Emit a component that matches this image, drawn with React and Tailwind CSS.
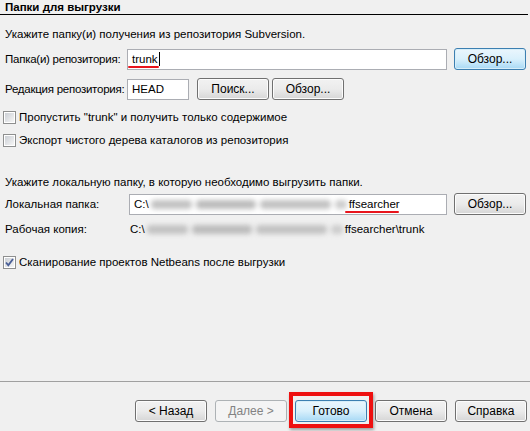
import React from 'react';

const btn =
  'h-[22px] w-[72px] rounded-[3px] border border-[#707070] bg-gradient-to-b from-[#f2f2f2] via-[#ebebeb] to-[#d6d6d6] text-[12px] text-black shadow-[inset_0_0_0_1px_#fcfcfc]';
const btnBlue =
  'h-[22px] w-[72px] rounded-[3px] border border-[#3c7fb1] bg-gradient-to-b from-[#eaf6fd] via-[#d9f0fc] to-[#a7d9f5] text-[12px] text-black shadow-[inset_0_0_0_1px_#d7eef9]';
const field = 'h-[21px] border border-[#abadb3] bg-white px-[4px] flex items-center whitespace-nowrap';

const CheckBox = ({ checked }) => (
  <span className="-ml-[2px] flex h-[13px] w-[13px] shrink-0 items-center justify-center border border-[#8e8f8f] bg-white">
    <span className="relative flex h-[9px] w-[9px] items-center justify-center bg-gradient-to-br from-[#cbcfd5] to-[#f6f6f6]">
      {checked && (
        <svg width="11" height="11" viewBox="0 0 11 11" className="absolute -left-[1px] -top-[1px]">
          <path d="M2 5.5 L4.3 8.2 L9 2" fill="none" stroke="#4a5f97" strokeWidth="1.8" />
        </svg>
      )}
    </span>
  </span>
);

// smudged, unreadable part of the path
const Blurred = ({ w }) => (
  <span className={`flex h-[12px] shrink-0 items-center gap-[4px] px-[2px] blur-[2.5px] ${w}`}>
    <span className="h-[9px] w-[42px] rounded-sm bg-[#c2c2c2]" />
    <span className="h-[9px] w-[60px] rounded-sm bg-[#bcbcbc]" />
    <span className="h-[9px] w-[72px] rounded-sm bg-[#c2c2c2]" />
    <span className="h-[9px] w-[12px] rounded-sm bg-[#cccccc]" />
  </span>
);

const RedLine = ({ className }) => (
  <span className={`absolute h-[2px] rounded-full bg-[#e8141c] ${className}`} />
);

export default function App() {
  return (
    <div
      className="flex h-[431px] w-[530px] flex-col bg-[#f0f0f0] text-[11.5px] text-black"
      style={{ fontFamily: '"Liberation Sans", Arial, sans-serif' }}
    >
      {/* Header */}
      <div className="mr-[2px] flex h-[15px] items-center border-b border-black pl-[5px]">
        <span className="font-bold leading-[14px]">Папки для выгрузки</span>
      </div>

      <div className="flex flex-col whitespace-nowrap pl-[5px] leading-[15px]">
        <div className="mt-[12px]">Укажите папку(и) получения из репозитория Subversion.</div>

        {/* Repository folders */}
        <div className="mt-[6px] flex items-center">
          <span className="w-[122px] shrink-0 tracking-[-0.25px]">Папка(и) репозитория:</span>
          <div className={`${field} relative w-[320px]`}>
            trunk<span className="ml-[1px] h-[14px] w-px bg-black" />
            <RedLine className="left-[0px] top-[16px] w-[31px]" />
          </div>
          <button className={`${btnBlue} ml-[7px]`}>Обзор...</button>
        </div>

        {/* Revision */}
        <div className="mt-[8px] flex items-center">
          <span className="w-[122px] shrink-0 tracking-[-0.25px]">Редакция репозитория:</span>
          <div className={`${field} w-[62px]`}>HEAD</div>
          <button className={`${btn} ml-[8px]`}>Поиск...</button>
          <button className={`${btn} ml-[3px]`}>Обзор...</button>
        </div>

        <label className="mt-[10px] flex items-center gap-[3px]">
          <CheckBox />
          <span>Пропустить "trunk" и получить только содержимое</span>
        </label>
        <label className="mt-[8px] flex items-center gap-[3px]">
          <CheckBox />
          <span>Экспорт чистого дерева каталогов из репозитория</span>
        </label>

        <div className="mt-[27px]">Укажите локальную папку, в которую необходимо выгрузить папки.</div>

        {/* Local folder */}
        <div className="mt-[3px] flex items-center">
          <span className="w-[124px] shrink-0">Локальная папка:</span>
          <div className={`${field} relative w-[318px]`}>
            C:\<Blurred w="w-[200px]" />ffsearcher
            <RedLine className="left-[215px] top-[16px] w-[54px]" />
          </div>
          <button className={`${btn} ml-[7px]`}>Обзор...</button>
        </div>

        <div className="mt-[7px] flex items-center">
          <span className="w-[124px] shrink-0">Рабочая копия:</span>
          <span className="pl-[1px]">C:\</span>
          <Blurred w="w-[200px]" />
          <span>ffsearcher\trunk</span>
        </div>

        <label className="mt-[18px] flex items-center gap-[3px]">
          <CheckBox checked />
          <span>Сканирование проектов Netbeans после выгрузки</span>
        </label>
      </div>

      <div className="flex-1" />

      {/* Footer */}
      <div className="border-t border-[#a0a0a0]">
        <div className="flex h-[49px] items-start justify-end gap-[8px] pr-[3px] pt-[18px]">
          <button className={btn}>&lt; Назад</button>
          <button className="h-[22px] w-[72px] rounded-[3px] border border-[#adb2b5] bg-[#f4f4f4] text-[12px] text-[#838383]">
            Далее &gt;
          </button>
          <div className="relative">
            <button className={btnBlue}>Готово</button>
            <span className="absolute -inset-x-[6px] -bottom-[6px] -top-[8px] border-4 border-[#ee1010] shadow-[1px_2px_3px_rgba(0,0,0,0.35)]" />
          </div>
          <button className={btn}>Отмена</button>
          <button className={btn}>Справка</button>
        </div>
      </div>
    </div>
  );
}
